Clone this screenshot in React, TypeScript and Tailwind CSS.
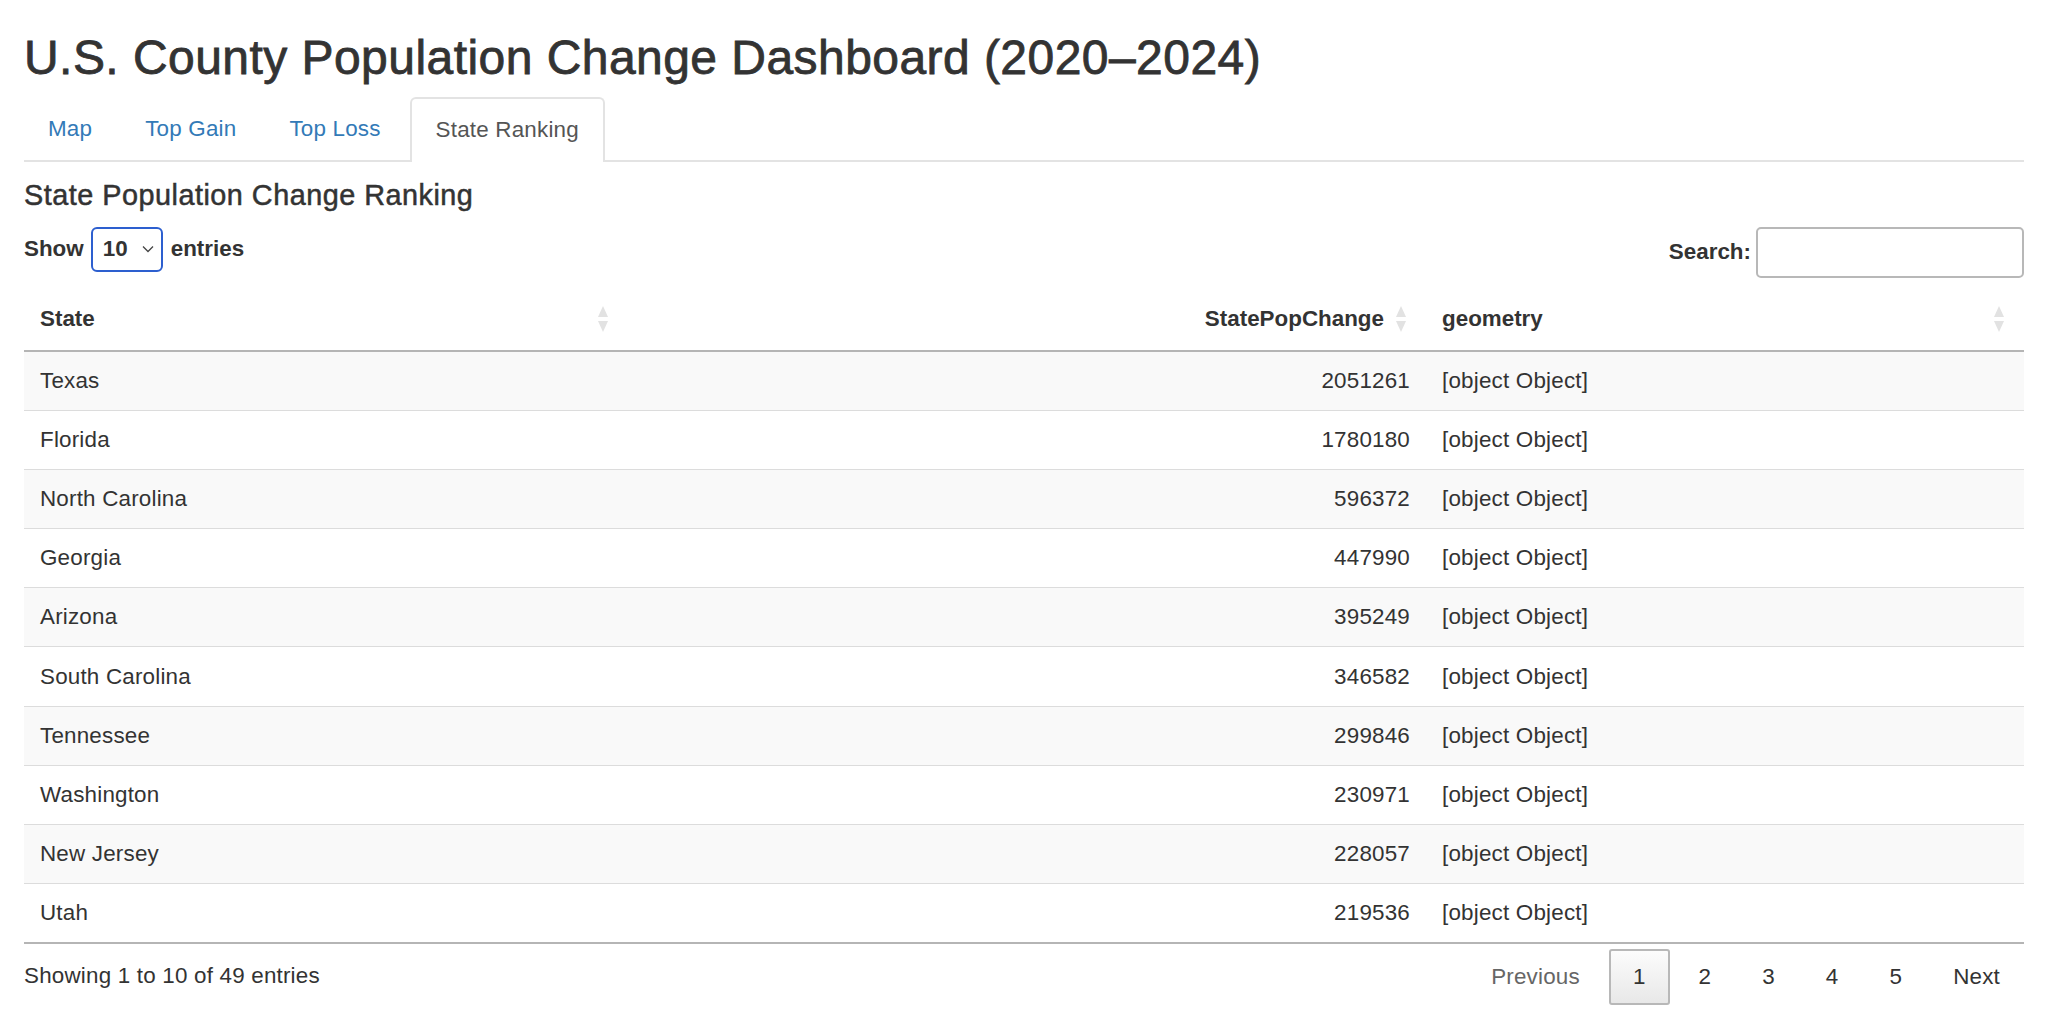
import React from 'react';

const rows = [
  { state: 'Texas', change: 2051261 },
  { state: 'Florida', change: 1780180 },
  { state: 'North Carolina', change: 596372 },
  { state: 'Georgia', change: 447990 },
  { state: 'Arizona', change: 395249 },
  { state: 'South Carolina', change: 346582 },
  { state: 'Tennessee', change: 299846 },
  { state: 'Washington', change: 230971 },
  { state: 'New Jersey', change: 228057 },
  { state: 'Utah', change: 219536 },
];

function SortIcon() {
  return (
    <svg width="10" height="28" viewBox="0 0 10 28" className="shrink-0">
      <polygon points="5,1 10,12 0,12" fill="#e2e2e2" />
      <polygon points="0,16 10,16 5,27" fill="#e2e2e2" />
    </svg>
  );
}

export default function App() {
  const tabs = ['Map', 'Top Gain', 'Top Loss'];

  return (
    <div
      className="min-h-screen bg-white px-6 text-[22.4px] leading-[32px] tracking-[0.2px] text-[#333]"
      style={{ fontFamily: '"Liberation Sans", Arial, sans-serif' }}
    >
      {/* Title */}
      <h2 className="mt-8 text-[48px] leading-[52.8px] tracking-[0.45px] text-[#333] [-webkit-text-stroke:0.8px_#333]">
        U.S. County Population Change Dashboard (2020–2024)
      </h2>

      {/* Tabs */}
      <div className="mt-3 flex border-b-2 border-[#e3e3e3]">
        {tabs.map((t) => (
          <div key={t} className="mr-[5px] mb-[-2px] h-[65px] px-6 flex items-center text-[#337ab7]">
            {t}
          </div>
        ))}
        <div className="mb-[-2px] h-[65px] px-6 flex items-center bg-white text-[#555] border-2 border-b-0 border-[#e3e3e3] rounded-t-[6px] relative after:content-[''] after:absolute after:left-0 after:right-0 after:bottom-[-2px] after:h-[2px] after:bg-white">
          State Ranking
        </div>
      </div>

      {/* Section heading */}
      <h4 className="mt-[18px] text-[28.8px] leading-[31.7px] tracking-[0.5px] text-[#333] [-webkit-text-stroke:0.5px_#333]">
        State Population Change Ranking
      </h4>

      {/* Length + search */}
      <div className="mt-[15px] flex items-start justify-between">
        <div className="flex items-center h-[45px] font-bold tracking-normal">
          <span>Show</span>
          <div className="ml-[7px] mr-[8px] h-[45px] w-[72px] rounded-[6px] border-2 border-[#2d5fcf] flex items-center pl-[10px] pr-[7px] justify-between">
            <span>10</span>
            <svg width="12" height="8" viewBox="0 0 12 8">
              <path d="M1 1.5 L6 6.5 L11 1.5" fill="none" stroke="#444" strokeWidth="1.3" />
            </svg>
          </div>
          <span>entries</span>
        </div>
        <div className="flex items-center font-bold tracking-normal">
          <span>Search:</span>
          <input
            className="ml-[5px] h-[51px] w-[268px] rounded-[5px] border-2 border-[#b8b8b8] px-2 outline-none"
            type="text"
          />
        </div>
      </div>

      {/* Table */}
      <div className="mt-[14px]">
        <div className="grid grid-cols-[603px_799px_598px] h-[60px] pb-[3px] border-b-2 border-[#b5b5b5] font-bold tracking-normal">
          <div className="flex items-center justify-between pl-4 pr-[19px]">
            <span>State</span>
            <SortIcon />
          </div>
          <div className="flex items-center justify-end gap-3 pr-5">
            <span>StatePopChange</span>
            <SortIcon />
          </div>
          <div className="flex items-center justify-between pl-4 pr-5">
            <span>geometry</span>
            <SortIcon />
          </div>
        </div>
        <div className="border-b-2 border-[#b5b5b5]">
          {rows.map((r, i) => (
            <div
              key={r.state}
              className={`grid grid-cols-[603px_799px_598px] items-center ${
                i === 0 ? 'h-[58.2px]' : 'h-[59.2px] border-t border-[#dcdcdc]'
              } ${i % 2 === 0 ? 'bg-[#f9f9f9]' : 'bg-white'}`}
            >
              <div className="pl-4">{r.state}</div>
              <div className="pr-4 text-right">{r.change}</div>
              <div className="pl-4">[object Object]</div>
            </div>
          ))}
        </div>
      </div>

      {/* Footer */}
      <div className="flex items-start justify-between">
        <div className="pt-[16px]">Showing 1 to 10 of 49 entries</div>
        <div className="pt-[5px] flex items-center gap-[7px]">
          <div className="h-[56px] px-[22px] flex items-center text-[#666]">Previous</div>
          <div className="h-[56px] px-[22px] flex items-center rounded-[3px] border-2 border-[#b8b8b8] bg-linear-to-b from-[#fcfcfc] to-[#e8e8e8]">
            1
          </div>
          {[2, 3, 4, 5].map((n) => (
            <div key={n} className="h-[56px] px-[22px] flex items-center">
              {n}
            </div>
          ))}
          <div className="h-[56px] pl-[22px] pr-[24px] flex items-center">Next</div>
        </div>
      </div>
    </div>
  );
}
